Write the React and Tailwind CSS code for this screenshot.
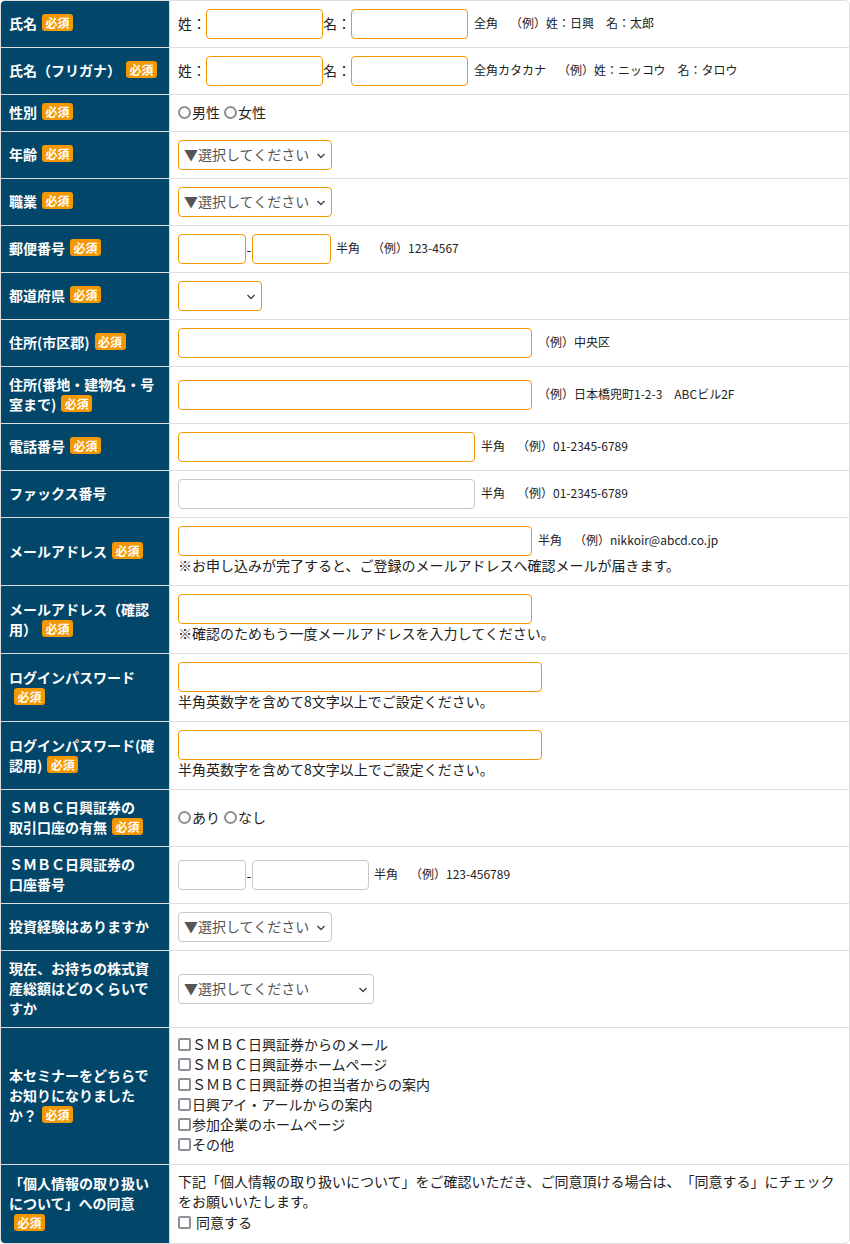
import React from "react";

const inO = "h-[30px] rounded-[4px] border border-[#f39800] bg-white outline-none";
const inG = "h-[30px] rounded-[4px] border border-[#c8c8c8] bg-white outline-none";

function Badge() {
  return (
    <span className="ml-[5px] inline-block w-[31px] rounded-[3px] bg-[#f39800] text-center align-[1px] text-[12px] leading-[17px] font-bold text-white">
      必須
    </span>
  );
}

function Row({ label, req, children, col }) {
  return (
    <div className="flex border-t border-[#dddddd] first:border-t-0">
      <div className="flex w-[169px] shrink-0 items-center border-r border-[#dddddd] bg-[#02476a] px-[8px] py-[8px]">
        <div className="relative top-[-1px] text-[14px] leading-[20px] font-bold text-white">
          {label}
          {req && <Badge />}
        </div>
      </div>
      <div
        className={
          col
            ? "flex flex-1 flex-col justify-center px-[8px] py-[8px] text-[14px] leading-[20px] text-[#222]"
            : "flex flex-1 items-center px-[8px] py-[8px] text-[14px] leading-[20px] text-[#222]"
        }
      >
        {children}
      </div>
    </div>
  );
}

function Chevron() {
  return (
    <svg
      className="absolute right-[5px] top-[12px] h-[6px] w-[10px]"
      viewBox="0 0 10 6"
      fill="none"
    >
      <path d="M1.5 1l3.5 3.5L8.5 1" stroke="#444" strokeWidth="1.4" />
    </svg>
  );
}

function Sel({ cls, text }) {
  return (
    <div className={cls + " relative flex items-center pl-[5px] text-[14px] text-[#555]"}>
      {text && <span className="relative top-[-1px]">{text}</span>}
      <Chevron />
    </div>
  );
}

function Radio({ label, first }) {
  return (
    <label className={first ? "flex items-center" : "ml-[4px] flex items-center"}>
      <input
        type="radio"
        name="r"
        className="m-0 h-[13px] w-[13px] appearance-none rounded-full border-2 border-[#8e8e96] bg-white"
      />
      <span className="ml-[1px]">{label}</span>
    </label>
  );
}

function Check({ label }) {
  return (
    <label className="flex h-[20px] items-center">
      <input
        type="checkbox"
        className="m-0 h-[13px] w-[13px] appearance-none rounded-[2px] border-2 border-[#8e8e96] bg-white"
      />
      <span className="ml-[1px]">{label}</span>
    </label>
  );
}

const Note = ({ children, cls }) => (
  <span className={(cls || "ml-[6px]") + " relative top-[-1px] text-[12px] leading-[20px] text-[#222]"}>{children}</span>
);

const T = ({ children }) => <span className="relative top-[-1px]">{children}</span>;

export default function App() {
  return (
    <div className="min-h-[1244px] bg-white font-['Noto_Sans_CJK_JP',sans-serif] [text-spacing-trim:space-all]">
      <div className="w-[850px] overflow-hidden rounded-[5px] border border-[#dddddd]">
        <Row label="氏名" req>
          <T>姓：</T>
          <input className={inO + " w-[117px]"} />
          <T>名：</T>
          <input className={inO + " w-[117px]"} />
          <Note>全角　（例）姓：日興　名：太郎</Note>
        </Row>
        <Row label="氏名（フリガナ）" req>
          <T>姓：</T>
          <input className={inO + " w-[117px]"} />
          <T>名：</T>
          <input className={inO + " w-[117px]"} />
          <Note>全角カタカナ　（例）姓：ニッコウ　名：タロウ</Note>
        </Row>
        <Row label="性別" req>
          <div className="relative top-[-1px] flex h-[20px] items-center">
            <Radio label="男性" first />
            <Radio label="女性" />
          </div>
        </Row>
        <Row label="年齢" req>
          <Sel cls={inO + " w-[154px]"} text="▼選択してください" />
        </Row>
        <Row label="職業" req>
          <Sel cls={inO + " w-[154px]"} text="▼選択してください" />
        </Row>
        <Row label="郵便番号" req>
          <input className={inO + " w-[68px]"} />
          <span className="w-[6px] text-center">-</span>
          <input className={inO + " w-[79px]"} />
          <Note cls="ml-[5px]">半角　（例）123-4567</Note>
        </Row>
        <Row label="都道府県" req>
          <Sel cls={inO + " w-[84px]"} />
        </Row>
        <Row label="住所(市区郡)" req>
          <input className={inO + " w-[354px]"} />
          <Note>（例）中央区</Note>
        </Row>
        <Row label="住所(番地・建物名・号室まで)" req>
          <input className={inO + " w-[354px]"} />
          <Note>（例）日本橋兜町1-2-3　ABCビル2F</Note>
        </Row>
        <Row label="電話番号" req>
          <input className={inO + " w-[297px]"} />
          <Note>半角　（例）01-2345-6789</Note>
        </Row>
        <Row label="ファックス番号">
          <input className={inG + " w-[297px]"} />
          <Note>半角　（例）01-2345-6789</Note>
        </Row>
        <Row label="メールアドレス" req col>
          <div className="flex items-center">
            <input className={inO + " w-[354px]"} />
            <Note>半角　（例）nikkoir@abcd.co.jp</Note>
          </div>
          <div className="relative top-[-1px] leading-[21px]">※お申し込みが完了すると、ご登録のメールアドレスへ確認メールが届きます。</div>
        </Row>
        <Row label="メールアドレス（確認用）" req col>
          <input className={inO + " w-[354px]"} />
          <div className="relative top-[-1px] leading-[21px]">※確認のためもう一度メールアドレスを入力してください。</div>
        </Row>
        <Row label="ログインパスワード" req col>
          <input type="password" className={inO + " w-[364px]"} />
          <div className="relative top-[-1px] leading-[21px]">半角英数字を含めて8文字以上でご設定ください。</div>
        </Row>
        <Row label="ログインパスワード(確認用)" req col>
          <input type="password" className={inO + " w-[364px]"} />
          <div className="relative top-[-1px] leading-[21px]">半角英数字を含めて8文字以上でご設定ください。</div>
        </Row>
        <Row
          label={
            <>
              ＳＭＢＣ日興証券の
              <br />
              取引口座の有無
            </>
          }
          req
        >
          <div className="relative top-[-1px] flex h-[20px] items-center">
            <Radio label="あり" first />
            <Radio label="なし" />
          </div>
        </Row>
        <Row
          label={
            <>
              ＳＭＢＣ日興証券の
              <br />
              口座番号
            </>
          }
        >
          <input className={inG + " w-[68px]"} />
          <span className="w-[6px] text-center">-</span>
          <input className={inG + " w-[117px]"} />
          <Note cls="ml-[5px]">半角　（例）123-456789</Note>
        </Row>
        <Row label="投資経験はありますか">
          <Sel cls={inG + " w-[154px]"} text="▼選択してください" />
        </Row>
        <Row label="現在、お持ちの株式資産総額はどのくらいですか">
          <Sel cls={inG + " w-[196px]"} text="▼選択してください" />
        </Row>
        <Row label="本セミナーをどちらでお知りになりましたか？" req col>
          <div className="relative top-[-2px] flex flex-col">
            <Check label="ＳＭＢＣ日興証券からのメール" />
            <Check label="ＳＭＢＣ日興証券ホームページ" />
            <Check label="ＳＭＢＣ日興証券の担当者からの案内" />
            <Check label="日興アイ・アールからの案内" />
            <Check label="参加企業のホームページ" />
            <Check label="その他" />
          </div>
        </Row>
        <Row label="「個人情報の取り扱いについて」への同意" req col>
          <div className="relative top-[-2px] flex flex-col">
            <div>
              下記「個人情報の取り扱いについて」をご確認いただき、ご同意頂ける場合は、「同意する」にチェックをお願いいたします。
            </div>
            <label className="flex h-[22px] items-center">
              <input
                type="checkbox"
                className="m-0 h-[13px] w-[13px] appearance-none rounded-[2px] border-2 border-[#8e8e96] bg-white"
              />
              <span className="ml-[5px]">同意する</span>
            </label>
          </div>
        </Row>
      </div>
    </div>
  );
}
